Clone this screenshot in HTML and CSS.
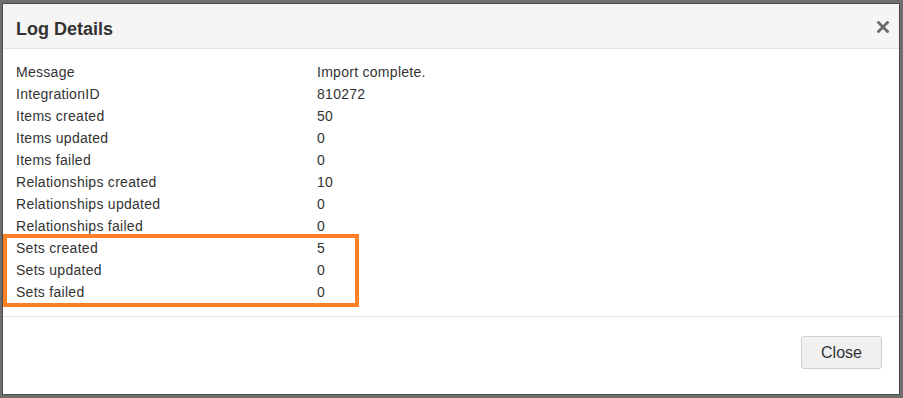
FILE: index.html
```html
<!DOCTYPE html>
<html lang="en">
<head>
  <meta charset="UTF-8">
  <title>Log Details</title>
  <link rel="stylesheet" href="styles.css">
</head>
<body>
  <div class="backdrop">
    <div class="modal">
      <div class="modal-header">
        <h4 class="modal-title">Log Details</h4>
        <button class="close" type="button" aria-label="Close">
          <svg width="12" height="12" viewBox="0 0 12 12">
            <path d="M1.5 1.5 L10.5 10.5 M10.5 1.5 L1.5 10.5" stroke="#6b6b6b" stroke-width="2.8" stroke-linecap="square"/>
          </svg>
        </button>
      </div>

      <div class="modal-body">
        <table class="log-table">
          <tr><td>Message</td><td>Import complete.</td></tr>
          <tr><td>IntegrationID</td><td>810272</td></tr>
          <tr><td>Items created</td><td>50</td></tr>
          <tr><td>Items updated</td><td>0</td></tr>
          <tr><td>Items failed</td><td>0</td></tr>
          <tr><td>Relationships created</td><td>10</td></tr>
          <tr><td>Relationships updated</td><td>0</td></tr>
          <tr><td>Relationships failed</td><td>0</td></tr>
          <tr><td>Sets created</td><td>5</td></tr>
          <tr><td>Sets updated</td><td>0</td></tr>
          <tr><td>Sets failed</td><td>0</td></tr>
        </table>
        <!-- highlight drawn over the Sets rows -->
        <div class="highlight"></div>
      </div>

      <div class="modal-footer">
        <button class="btn" type="button">Close</button>
      </div>
    </div>
  </div>
</body>
</html>
```

FILE: styles.css
```css
* {
  margin: 0;
  padding: 0;
  box-sizing: border-box;
}

body, html {
  height: 100%;
  font-family: "Liberation Sans", Arial, sans-serif;
  background-color: #6f6f6f;
  color: #333;
}

.backdrop {
  padding: 3px 3px 3px 2px;
  height: 100%;
}

.modal {
  width: 898px;
  height: 392px;
  background-color: #fff;
  border: 1px solid #4a4a4a;
  display: flex;
  flex-direction: column;
}

.modal-header {
  display: flex;
  justify-content: space-between;
  align-items: flex-start;
  background-color: #f5f5f5;
  border-bottom: 1px solid #e2e2e2;
  padding: 15px 10px 9px 13px;
}

.modal-title {
  font-size: 18px;
  font-weight: bold;
  line-height: 20px;
  color: #333;
}

.close {
  background: transparent;
  border: none;
  cursor: pointer;
  margin-top: 2px;
  width: 12px;
  height: 12px;
  display: block;
}

.close svg {
  display: block;
}

.modal-body {
  position: relative;
  padding: 12px 13px 13px 13px;
}

.log-table {
  border-collapse: collapse;
  font-size: 14px;
  line-height: 22px;
  letter-spacing: 0.28px;
}

.log-table td {
  padding: 0;
  vertical-align: top;
}

.log-table td:first-child {
  width: 301px;
}

.highlight {
  position: absolute;
  left: 0;
  top: 185px;
  width: 356px;
  height: 73px;
  border: 4px solid #fd7f26;
}

.modal-footer {
  flex: 1;
  border-top: 1px solid #e2e2e2;
  display: flex;
  justify-content: flex-end;
  align-items: flex-start;
  padding: 19px 17px 0 0;
}

.btn {
  font-family: "Liberation Sans", Arial, sans-serif;
  font-size: 16px;
  color: #333;
  background-color: #f0f0f0;
  border: 1px solid #cfcfcf;
  border-radius: 3px;
  width: 81px;
  height: 33px;
  cursor: pointer;
}
```
